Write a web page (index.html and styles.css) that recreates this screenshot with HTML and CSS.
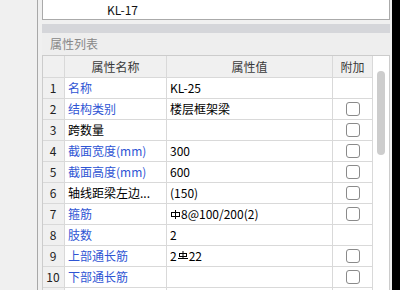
FILE: index.html
```html
<!DOCTYPE html>
<html lang="zh-CN">
<head>
<meta charset="utf-8">
<title>属性列表</title>
<link rel="stylesheet" href="styles.css">
</head>
<body>
<div class="screen">
  <div class="side"></div>
  <div class="panel">
    <div class="list-box"><span class="list-item">KL-17</span></div>
    <div class="bar"></div>
    <div class="band">属性列表</div>
    <div class="table">
      <div class="grid">
        <div class="cell head num"></div>
        <div class="cell head center">属性名称</div>
        <div class="cell head center">属性值</div>
        <div class="cell head center">附加</div>

        <div class="cell num">1</div>
        <div class="cell name blue">名称</div>
        <div class="cell val">KL-25</div>
        <div class="cell chk"></div>

        <div class="cell num">2</div>
        <div class="cell name blue">结构类别</div>
        <div class="cell val">楼层框架梁</div>
        <div class="cell chk"><span class="box"></span></div>

        <div class="cell num">3</div>
        <div class="cell name">跨数量</div>
        <div class="cell val"></div>
        <div class="cell chk"><span class="box"></span></div>

        <div class="cell num">4</div>
        <div class="cell name blue">截面宽度(mm)</div>
        <div class="cell val">300</div>
        <div class="cell chk"><span class="box"></span></div>

        <div class="cell num">5</div>
        <div class="cell name blue">截面高度(mm)</div>
        <div class="cell val">600</div>
        <div class="cell chk"><span class="box"></span></div>

        <div class="cell num">6</div>
        <div class="cell name">轴线距梁左边...</div>
        <div class="cell val">(150)</div>
        <div class="cell chk"><span class="box"></span></div>

        <div class="cell num">7</div>
        <div class="cell name blue">箍筋</div>
        <div class="cell val"><svg class="sym1" width="9" height="9" viewBox="0 0 9 9"><rect x="0.5" y="2.5" width="8" height="4" fill="none" stroke="#000" stroke-width="1"/><line x1="4.5" y1="0" x2="4.5" y2="9" stroke="#000" stroke-width="1"/></svg>8@100/200(2)</div>
        <div class="cell chk"><span class="box"></span></div>

        <div class="cell num">8</div>
        <div class="cell name blue">肢数</div>
        <div class="cell val">2</div>
        <div class="cell chk"></div>

        <div class="cell num">9</div>
        <div class="cell name blue">上部通长筋</div>
        <div class="cell val">2<svg class="sym2" width="10" height="8" viewBox="0 0 10 8"><line x1="5" y1="0" x2="5" y2="7" stroke="#000" stroke-width="1"/><rect x="1.5" y="2.5" width="7" height="3" fill="none" stroke="#000" stroke-width="1"/><line x1="0" y1="7.5" x2="10" y2="7.5" stroke="#000" stroke-width="1"/></svg>22</div>
        <div class="cell chk"><span class="box"></span></div>

        <div class="cell num">10</div>
        <div class="cell name blue">下部通长筋</div>
        <div class="cell val"></div>
        <div class="cell chk"><span class="box"></span></div>

        <div class="cell num"></div>
        <div class="cell name"></div>
        <div class="cell val"></div>
        <div class="cell chk"></div>
      </div>
      <div class="scroll"><div class="thumb"></div></div>
    </div>
  </div>
  <div class="edge"></div>
</div>
</body>
</html>
```

FILE: styles.css
```css
* { box-sizing: border-box; }
html, body { margin: 0; padding: 0; }
body {
  background: #f0f0f0;
  font-family: "Noto Sans CJK SC", "Noto Sans", "Liberation Sans", sans-serif;
  font-size: 12px;
  color: #000;
}
.screen {
  display: flex;
  width: 400px;
  height: 290px;
  overflow: hidden;
}
.side {
  width: 38px;
  flex: none;
  background: #f0f0f0;
  border-right: 1px solid #a8a8a8;
}
.panel {
  flex: 1;
  min-width: 0;
  padding: 0 2px 0 4px;
  background: #f0f0f0;
}
.edge {
  width: 8px;
  flex: none;
  background: #000;
}
.list-box {
  height: 20px;
  background: #fff;
  border: 1px solid #aaaaaa;
  border-top: none;
  padding-left: 64px;
  line-height: 19px;
  color: #111;
}
.bar {
  margin-top: 4px;
  height: 9px;
  background: #d5d6da;
}
.band {
  height: 22px;
  background: #eeeeee;
  color: #888888;
  padding-left: 8px;
  line-height: 22px;
}
.table {
  display: flex;
  background: #fff;
  border: 1px solid #cccccc;
  border-bottom: none;
}
.grid {
  display: grid;
  grid-template-columns: 22px 102px 166px 40px;
  grid-template-rows: 22px;
  grid-auto-rows: 21px;
  width: 330px;
  flex: none;
}
.cell {
  border-right: 1px solid #d9d9d9;
  border-bottom: 1px solid #d9d9d9;
  line-height: 20px;
  white-space: nowrap;
  overflow: hidden;
}
.cell.head {
  background: #f0f0f0;
  color: #3a3a3a;
  line-height: 21px;
}
.center { text-align: center; }
.num {
  background: #f0f0f0;
  text-align: center;
  color: #222;
  padding-right: 1px;
}
.name { padding-left: 3px; }
.blue { color: #2f55d4; }
.val { padding-left: 3px; }
.chk {
  display: flex;
  align-items: center;
  justify-content: center;
}
.box {
  width: 14px;
  height: 14px;
  border: 1px solid #8a8a8a;
  border-radius: 3px;
  background: #fff;
  margin-left: 1px;
}
.sym1 {
  vertical-align: 0px;
  margin: 0 1px 0 1px;
}
.sym2 {
  vertical-align: 2px;
  margin: 0 1px 0 1px;
}
.scroll {
  flex: 1;
  padding: 15px 0 0 4px;
}
.thumb {
  width: 8px;
  height: 84px;
  border-radius: 4px;
  background: #cdcdcd;
}
```
